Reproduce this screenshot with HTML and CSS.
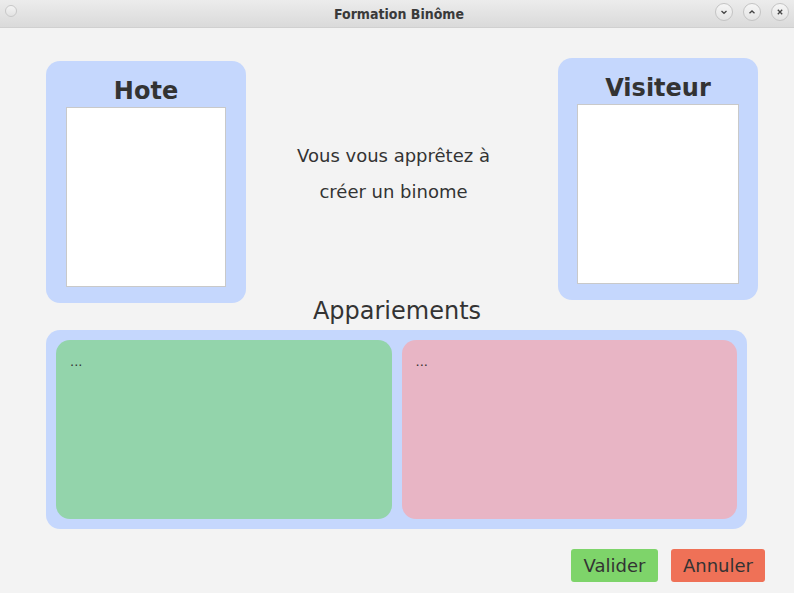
FILE: index.html
```html
<!DOCTYPE html>
<html>
<head>
<meta charset="utf-8">
<link rel="stylesheet" href="styles.css">
</head>
<body>
<div class="window">
  <div class="titlebar">
    <span class="dot"></span>
    <span class="title">Formation Binôme</span>
    <div class="controls">
      <span class="ctl"><svg width="18" height="18" viewBox="0 0 18 18"><path d="M6.5 8 L9 10.3 L11.5 8" fill="none" stroke="#444" stroke-width="1.3"/></svg></span>
      <span class="ctl"><svg width="18" height="18" viewBox="0 0 18 18"><path d="M6.5 10.3 L9 8 L11.5 10.3" fill="none" stroke="#444" stroke-width="1.3"/></svg></span>
      <span class="ctl"><svg width="18" height="18" viewBox="0 0 18 18"><path d="M6.8 6.8 L11.2 11.2 M11.2 6.8 L6.8 11.2" fill="none" stroke="#444" stroke-width="1.3"/></svg></span>
    </div>
  </div>
  <div class="content">
    <div class="top">
      <div class="panel hote">
        <div class="panel-title">Hote</div>
        <div class="slot"></div>
      </div>
      <div class="message">
        <p>Vous vous apprêtez à</p>
        <p>créer un binome</p>
      </div>
      <div class="panel visiteur">
        <div class="panel-title">Visiteur</div>
        <div class="slot"></div>
      </div>
    </div>
    <div class="section-title">Appariements</div>
    <div class="pairs">
      <div class="pair green">...</div>
      <div class="pair pink">...</div>
    </div>
    <div class="actions">
      <button class="btn ok">Valider</button>
      <button class="btn cancel">Annuler</button>
    </div>
  </div>
</div>
</body>
</html>
```

FILE: styles.css
```css
* { box-sizing: border-box; }
html, body { margin: 0; padding: 0; }
body {
  font-family: "DejaVu Sans", "Liberation Sans", sans-serif;
  color: #333;
}
.window {
  width: 794px;
  height: 593px;
  background: #f3f3f3;
  overflow: hidden;
}
.titlebar {
  height: 28px;
  background: linear-gradient(#ececec, #dadada);
  border-bottom: 1px solid #d0d0d0;
  display: flex;
  align-items: center;
  position: relative;
}
.dot {
  position: absolute;
  left: 5px;
  top: 5px;
  width: 12px;
  height: 12px;
  border-radius: 50%;
  border: 1px solid #c8c8c8;
  background: linear-gradient(#f4f4f4, #e2e2e2);
}
.title {
  flex: 1;
  text-align: center;
  font-weight: bold;
  font-size: 14px;
  font-stretch: condensed;
  color: #3a3a3a;
  padding-left: 4px;
}
.controls {
  position: absolute;
  right: 5px;
  top: 3px;
  display: flex;
  gap: 10px;
}
.ctl {
  width: 18px;
  height: 18px;
  border-radius: 50%;
  border: 1px solid #c4c4c4;
  background: linear-gradient(#f6f6f6, #e4e4e4);
  display: flex;
  align-items: center;
  justify-content: center;
}
.ctl svg { display: block; margin: -1px; }
.content {
  padding: 0 36px 0 46px;
}
.top {
  display: flex;
  align-items: flex-start;
  margin-top: 30px;
}
.panel {
  width: 200px;
  height: 242px;
  background: #c5d7fd;
  border-radius: 14px;
  padding: 16px 20px 16px 20px;
  display: flex;
  flex-direction: column;
  align-items: center;
}
.hote { margin-top: 3px; }
.visiteur { padding-left: 19px; padding-right: 19px; }
.panel-title {
  font-weight: bold;
  font-size: 24px;
  line-height: 28px;
  height: 28px;
  margin-bottom: 2px;
}
.slot {
  width: 100%;
  height: 181px;
  background: #fff;
  border: 1px solid #c9c9c9;
}
.message {
  flex: 1;
  text-align: center;
  font-size: 18px;
  margin-top: 80px;
  padding-right: 17px;
}
.message p {
  margin: 0;
  line-height: 36px;
}
.section-title {
  text-align: center;
  font-size: 24px;
  line-height: 30px;
  margin-top: -7px;
  margin-right: 10px;
}
.pairs {
  margin-top: 4px;
  width: 701px;
  height: 199px;
  background: #c5d7fd;
  border-radius: 14px;
  padding: 10px;
  display: flex;
  gap: 10px;
}
.pair {
  flex: 1;
  border-radius: 14px;
  padding: 14px 14px;
  font-size: 13px;
  line-height: 16px;
}
.green { background: #93d4ab; }
.pink { background: #e8b5c5; }
.actions {
  display: flex;
  justify-content: flex-end;
  gap: 13px;
  margin-top: 20px;
  margin-right: -7px;
}
.btn {
  font-family: "DejaVu Sans", sans-serif;
  font-size: 18px;
  color: #333;
  border: none;
  border-radius: 3px;
  height: 33px;
  padding: 0;
}
.ok { background: #7ed46a; width: 87px; }
.cancel { background: #ef7157; width: 94px; }
```
